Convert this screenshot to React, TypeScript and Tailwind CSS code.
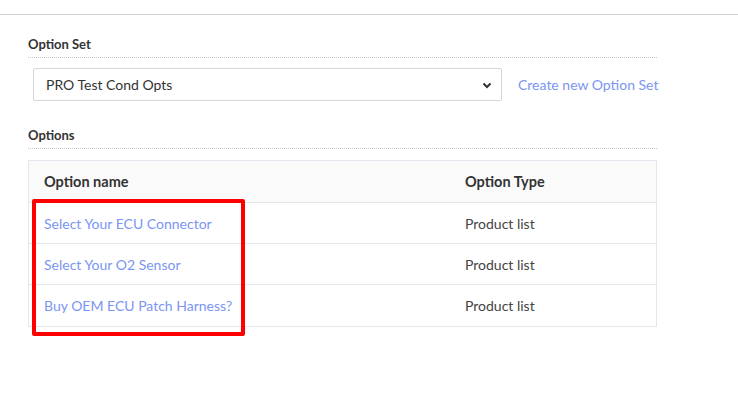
const rows = [
  "Select Your ECU Connector",
  "Select Your O2 Sensor",
  "Buy OEM ECU Patch Harness?",
];

export default function App() {
  return (
    <div className="relative h-[404px] w-[738px] bg-white font-['Lato','Liberation_Sans',sans-serif] text-[#333]">
      <div className="h-[14px]" />
      <div className="border-t border-[#d0d0d0] pl-[28px] pr-[81px]">
        <div className="mt-[19px] border-b border-dotted border-[#c8c8c8] pb-[3px] text-[13px] font-bold leading-[20px]">
          Option Set
        </div>
        <div className="mt-[10px] flex items-center pl-[5px]">
          <div className="flex h-[33px] w-[469px] shrink-0 items-center justify-between rounded-[2px] border border-[#d6d6d6] pl-[12px] pr-[8px]">
            <span className="text-[14px] text-[#333]">PRO Test Cond Opts</span>
            <svg width="12" height="12" viewBox="0 0 12 12">
              <path d="M2.5 4.5 L6 8 L9.5 4.5" fill="none" stroke="#333" strokeWidth="2" />
            </svg>
          </div>
          <a className="ml-[16px] whitespace-nowrap text-[14px] text-[#7b95f3]">Create new Option Set</a>
        </div>
        <div className="mt-[24px] border-b border-dotted border-[#c8c8c8] pb-[3px] text-[13px] font-bold leading-[20px]">
          Options
        </div>
        <div className="mt-[11px] w-[629px] border border-[#e4e6ee]">
          <div className="flex h-[42px] items-center border-b border-[#e4e6ee] bg-[#fafafa] text-[14.5px] font-bold">
            <div className="w-[421px] pl-[15px]">Option name</div>
            <div className="pl-[15px]">Option Type</div>
          </div>
          {rows.map((r, i) => (
            <div
              key={r}
              className={`flex h-[41px] items-center text-[14px] ${i < rows.length - 1 ? "border-b border-[#e4e6ee]" : ""}`}
            >
              <div className="w-[421px] pl-[15px] text-[#7b95f3]">{r}</div>
              <div className="pl-[15px] text-[#444]">Product list</div>
            </div>
          ))}
        </div>
      </div>
      <div className="absolute left-[32px] top-[199px] h-[137px] w-[213px] rounded-[2px] border-4 border-[#ff0000]" />
    </div>
  );
}
